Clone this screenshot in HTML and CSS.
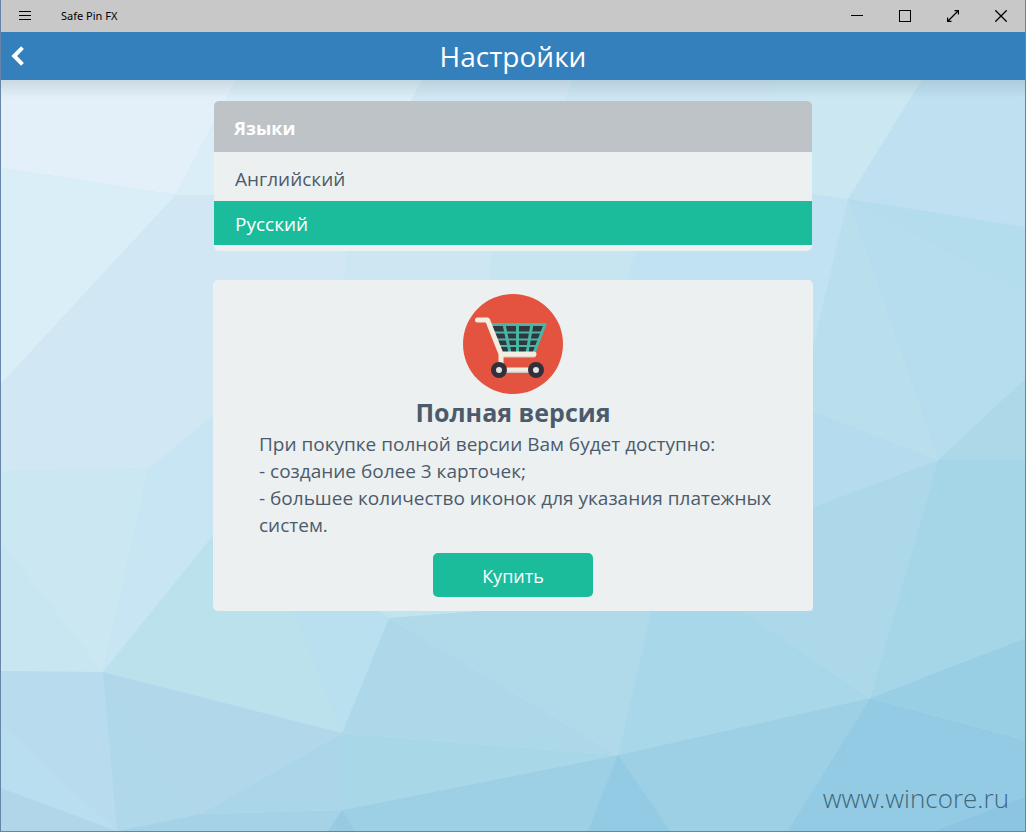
FILE: index.html
```html
<!DOCTYPE html>
<html lang="ru">
<head>
<meta charset="utf-8">
<title>Safe Pin FX</title>
<link rel="stylesheet" href="styles.css">
</head>
<body>
<div class="window">
  <header class="titlebar">
    <button class="tb-btn" aria-label="Меню"><svg width="12" height="12" viewBox="0 0 12 12" shape-rendering="crispEdges"><path d="M0 1.5h12M0 5.5h12M0 9.5h12"/></svg></button>
    <span class="app-name">Safe Pin FX</span>
    <button class="tb-btn" aria-label="Свернуть"><svg width="12" height="12" viewBox="0 0 12 12" shape-rendering="crispEdges"><path d="M0 5.5h12"/></svg></button>
    <button class="tb-btn" aria-label="Развернуть"><svg width="12" height="12" viewBox="0 0 12 12" shape-rendering="crispEdges"><path d="M.5.5h11v11H.5z"/></svg></button>
    <button class="tb-btn bold" aria-label="Во весь экран"><svg width="12" height="12" viewBox="0 0 12 12"><path d="M.5 11.5l11-11M7.500.5h4v4M.5 7.500v4h4"/></svg></button>
    <button class="tb-btn bold" aria-label="Закрыть"><svg width="12" height="12" viewBox="0 0 12 12"><path d="M.3.3l11.400 11.400M11.700.3L.3 11.700"/></svg></button>
  </header>
  <div class="navbar">
    <button class="back" aria-label="Назад"><svg width="14" height="20" viewBox="0 0 14 20"><path d="M11.500 1.700L3.200 10l8.300 8.300"/></svg></button>
    <h1 class="title">Настройки</h1>
  </div>
  <main class="content">
    <svg class="backdrop" viewBox="1 80 1024 751" preserveAspectRatio="none" aria-hidden="true">
      <path fill="#c2e3f2" d="M1 80h1024v751H1z"/>
      <path fill="#e3f0f9" d="M1 80h235l-60 115L1 168z"/>
      <path fill="#daeef7" d="M236 80h186l-60 120-186-5z"/>
      <path fill="#d1e8f4" d="M422 80h151l-50 130H350z"/>
      <path fill="#cbe5f2" d="M573 80h204l-60 130H520z"/>
      <path fill="#cae7f2" d="M777 80h145l-74 119-135-17z"/>
      <path fill="#bfe0f1" d="M922 80h103v147l-177-28z"/>
      <path fill="#daeef7" d="M1 168l175 27L1 384z"/>
      <path fill="#d1e8f4" d="M1 384l175-189h174l-5 90-59 80-137 103L1 471z"/>
      <path fill="#cde7f2" d="M350 195h148l-9 90H344z"/>
      <path fill="#c7e5f0" d="M498 195h155l-29 90H489z"/>
      <path fill="#c0e2f2" d="M653 182h60l135 17-35 148v64H600z"/>
      <path fill="#cae7f2" d="M1 471l148-3-46 204-102-1z"/>
      <path fill="#c7e5f2" d="M149 468l140-115 100 100-174 80-112 139z"/>
      <path fill="#c8e5f2" d="M1 542l102 130-102-1z"/>
      <path fill="#bbe1ed" d="M103 672l112-139 170 50 4 35-47 115z"/>
      <path fill="#b9e0ee" d="M293 611h87l9 7-47 115z"/>
      <path fill="#c0e5ee" d="M380 611h100l-91 7z"/>
      <path fill="#b8dcee" d="M1 671l102 1 14 159L1 788z"/>
      <path fill="#b9deef" d="M1 724l116 107L1 788z"/>
      <path fill="#b1d6ea" d="M1 788l116 43H1z"/>
      <path fill="#b0d8ea" d="M103 672l239 61-142 81-83 17z"/>
      <path fill="#afd8ea" d="M103 672l97 142-83 17z"/>
      <path fill="#abd6e9" d="M342 733v77l-142 4z"/>
      <path fill="#a8d7e8" d="M342 733l276 22-276 55z"/>
      <path fill="#a6d2e8" d="M117 831l83-17 142-4v21z"/>
      <path fill="#add8e9" d="M389 618l229 137-276-22z"/>
      <path fill="#b0d9ea" d="M389 618l90-7h172l-33 144z"/>
      <path fill="#a7d7e8" d="M651 611h91l128 87-252 57z"/>
      <path fill="#9dcfe5" d="M342 810l276-55 252-57-83 133H342z"/>
      <path fill="#99cae4" d="M342 810l13 21h-27z"/>
      <path fill="#93cbe5" d="M618 755l52 76h-82z"/>
      <path fill="#b9dfed" d="M848 199l90 261-125-49v-65z"/>
      <path fill="#b5dded" d="M848 199l177 28v152l-87 81z"/>
      <path fill="#b3dced" d="M848 199l177 28v66z"/>
      <path fill="#b5dcee" d="M813 411l125 49-125 47z"/>
      <path fill="#add8ea" d="M813 507l125-47-68 238-128-87h71z"/>
      <path fill="#acd8e8" d="M938 460l87-81v81z"/>
      <path fill="#a4d6e7" d="M938 460h87v178l-155 60z"/>
      <path fill="#99cfe4" d="M870 698l155-60v102z"/>
      <path fill="#93cbe5" d="M870 698l155 42v91H787z"/>
      <path fill="#8bc5e2" d="M935 831l90-34v34z"/>
    </svg>
    <section class="languages">
      <h2 class="lang-head">Языки</h2>
      <button class="lang">Английский</button>
      <button class="lang selected" aria-pressed="true">Русский</button>
    </section>
    <section class="purchase">
      <svg class="cart" width="100" height="100" viewBox="0 0 100 100" aria-hidden="true">
        <circle cx="50" cy="50" r="50" fill="#e4533f"/>
        <path fill="#31363f" d="M29 31h52L71 59H39z"/>
        <path fill="none" stroke="#49b5a4" stroke-width="3" d="M28 30.500h54L71 59M41 30l6 29M54.500 30v29M69 30l-5 29"/>
        <path fill="none" stroke="#49b5a4" stroke-width="2" d="M31 38.500h48M34 45.500h42M36 52h37"/>
        <path fill="none" stroke="#cfcbc0" stroke-width="4" stroke-linecap="round" d="M38 61.500h33M40 77h28"/>
        <path fill="none" stroke="#f3ede1" stroke-width="5" stroke-linecap="round" stroke-linejoin="round" d="M14.500 26h10L38 60v9M38 60h33"/>
        <path fill="none" stroke="#f3ede1" stroke-width="4" d="M38 75.500h33"/>
        <circle cx="36" cy="76" r="8" fill="#31303b"/><circle cx="73" cy="76" r="8" fill="#31303b"/>
        <circle cx="36" cy="76" r="3" fill="#e5e4df"/><circle cx="73" cy="76" r="3" fill="#e5e4df"/>
      </svg>
      <h2 class="purchase-title">Полная версия</h2>
      <p class="purchase-text">При покупке полной версии Вам будет доступно:<br>- создание более 3 карточек;<br>- большее количество иконок для указания платежных систем.</p>
      <button class="buy">Купить</button>
    </section>
    <a class="site" href="#">www.wincore.ru</a>
  </main>
</div>
</body>
</html>
```
FILE: styles.css
```css
* { box-sizing: border-box; }
body { margin: 0; font-family: "Open Sans", "Noto Sans", sans-serif; color: #4c5b6b; }
button { font: inherit; color: inherit; border: 0; padding: 0; background: none; }
h1, h2, p { margin: 0; }
svg { display: block; }
.window { min-height: 100vh; display: flex; flex-direction: column; border: 1px solid #6685a8; border-top: 0; }
.titlebar { height: 32px; display: flex; align-items: center; background: #c8c8c8; color: #000; }
.tb-btn { width: 48px; height: 32px; display: flex; align-items: center; justify-content: center; }
.tb-btn path { fill: none; stroke: #000; stroke-width: 1; }
.bold path { stroke-width: 1.3; }
.app-name { flex: 1; padding-left: 12px; font-family: "Noto Sans", sans-serif; font-size: 11px; line-height: 14px; padding-bottom: 1px; }
.navbar { height: 48px; display: grid; grid-template-columns: 40px 1fr 40px; align-items: center; background: #3380bd; color: #fff; }
.back { height: 48px; padding-left: 10px; }
.back path { fill: none; stroke: #fff; stroke-width: 4; }
.title { text-align: center; font-size: 28px; line-height: 48px; font-weight: 400; }
.content { flex: 1; position: relative; isolation: isolate; display: flex; flex-direction: column; align-items: center; padding: 21px 16px 13px; }
.content::before { content: ""; position: absolute; inset: 0 0 auto; height: 18px; z-index: -1; background: linear-gradient(rgba(90, 110, 120, .18), rgba(90, 110, 120, 0)); }
.backdrop { position: absolute; inset: 0; width: 100%; height: 100%; z-index: -2; }
.languages { width: 100%; max-width: 598px; border-radius: 5px; overflow: hidden; background: #ecf0f1; padding-bottom: 6px; }
.lang-head { padding: 2px 20px 0; background: #bdc3c7; color: #fff; font-size: 18px; line-height: 51px; height: 51px; }
.lang { display: block; width: 100%; height: 44px; margin-top: 5px; padding-left: 21px; text-align: left; font-size: 19px; line-height: 44px; }
.selected { margin-top: 0; padding-top: 2px; line-height: 42px; background: #1bbc9b; color: #fff; }
.purchase { width: 100%; max-width: 600px; margin-top: 29px; padding: 14px 30px; border-radius: 5px; background: #ecf0f1; display: flex; flex-direction: column; align-items: center; }
.purchase-title { font-size: 25px; line-height: 37px; }
.purchase-text { width: 100%; padding-left: 16px; font-size: 19px; line-height: 27px; }
.buy { width: 160px; height: 44px; margin-top: 14px; padding-top: 2px; border-radius: 5px; background: #1bbc9b; color: #fff; font-size: 18px; }
.site { margin-top: auto; align-self: flex-end; font-size: 26px; line-height: 40px; font-weight: 300; color: #41687d; text-decoration: none; }
```
